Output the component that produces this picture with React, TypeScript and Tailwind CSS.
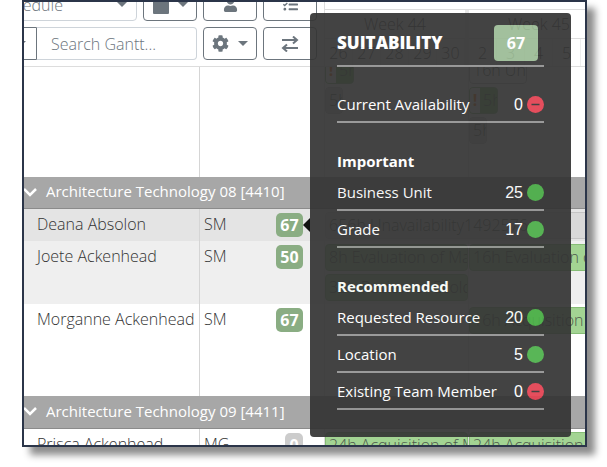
import type { ReactNode } from 'react';
import { FaCog, FaUser, FaTasks } from 'react-icons/fa';

interface Bar {
  label: string;
  kind: 'green' | 'gray' | 'white' | 'alert';
  className?: string;
}

interface Resource {
  name: string;
  grade: string;
  score: number;
  rowClass: string;
  weeks: Bar[][];
}

interface Criterion {
  label: string;
  value: number;
  met: boolean;
}

const WEEKS = [
  { name: 'Week 44', days: ['26', '27', '28', '29', '30'] },
  { name: 'Week 45', days: ['2', '3', '4', '5', ''] },
];

const DEANA: Resource = {
  name: 'Deana Absolon',
  grade: 'SM',
  score: 67,
  rowClass: 'h-8 bg-[#e4e4e4]',
  weeks: [[{ label: '656h Unavailability1492576', kind: 'gray', className: 'w-[270px]' }], []],
};

const JOETE: Resource = {
  name: 'Joete Ackenhead',
  grade: 'SM',
  score: 50,
  rowClass: 'h-[63px] bg-[#efefef]',
  weeks: [
    [
      { label: '8h Evaluation of Ma', kind: 'green' },
      { label: '32h Review of Ecoldy', kind: 'green' },
    ],
    [{ label: '16h Evaluation of Ma', kind: 'green' }],
  ],
};

const MORGANNE: Resource = {
  name: 'Morganne Ackenhead',
  grade: 'SM',
  score: 67,
  rowClass: 'h-[92px] bg-white',
  weeks: [[], [{ label: '16h Acquisition of M', kind: 'green' }]],
};

const PRISCA: Resource = {
  name: 'Prisca Ackenhead',
  grade: 'MG',
  score: 0,
  rowClass: 'h-4 bg-white',
  weeks: [
    [{ label: '24h Acquisition of M', kind: 'green', className: 'bg-[#8db37f]' }],
    [{ label: '24h Acquisition', kind: 'green' }],
  ],
};

const IMPORTANT: Criterion[] = [
  { label: 'Business Unit', value: 25, met: true },
  { label: 'Grade', value: 17, met: true },
];

const RECOMMENDED: Criterion[] = [
  { label: 'Requested Resource', value: 20, met: true },
  { label: 'Location', value: 5, met: true },
  { label: 'Existing Team Member', value: 0, met: false },
];

const BAR_STYLES = {
  green: 'bg-[#a3d493] border-[#86bd76]',
  gray: 'bg-[#d9d9d9] border-[#c4c4c4]',
  white: 'bg-white border-[#bbbbbb]',
  alert: 'bg-[#7cc367] border-[#86bd76]',
};

const Caret = ({ className = '' }: { className?: string }) => (
  <svg viewBox="0 0 10 5" className={`h-[5px] w-[10px] fill-[#6c757d] ${className}`}>
    <path d="M0 0h10L5 5z" />
  </svg>
);

const ToolButton = ({ label, children }: { label: string; children: ReactNode }) => (
  <button
    aria-label={label}
    className="flex h-[33px] w-[54px] shrink-0 items-center justify-center gap-[9px] rounded border border-[#6c757d] bg-white text-base text-[#6c757d]"
  >
    {children}
  </button>
);

const Toolbar = () => (
  <div className="flex w-[300px] shrink-0 flex-col gap-[6px] pb-[5px]">
    <div className="-mt-[14px] flex gap-[6px]">
      <div className="relative -ml-10 w-[153px] shrink-0">
        <select
          aria-label="View"
          className="h-[33px] w-full appearance-none rounded border border-[#ced4da] bg-white pl-3 text-base text-[#6c757d]"
        >
          <option>Schedule</option>
        </select>
        <Caret className="absolute top-[14px] right-[10px]" />
      </div>
      <ToolButton label="Calendar">
        <svg viewBox="0 0 16 18" className="h-[18px] w-4 fill-[#6c757d]">
          <path d="M0 6h16v11a1 1 0 0 1-1 1H1a1 1 0 0 1-1-1zM1 2h2V0h2v2h6V0h2v2h2a1 1 0 0 1 1 1v2H0V3a1 1 0 0 1 1-1z" />
        </svg>
        <Caret />
      </ToolButton>
      <ToolButton label="Resources">
        <FaUser size={15} />
      </ToolButton>
      <ToolButton label="Tasks">
        <FaTasks size={15} />
      </ToolButton>
    </div>
    <div className="flex gap-[6px]">
      <div className="-ml-10 flex w-[213px] shrink-0">
        <button
          aria-label="Search options"
          className="flex w-[53px] shrink-0 items-center justify-end rounded-l border border-[#6c757d] bg-white pr-[10px]"
        >
          <Caret />
        </button>
        <input
          type="text"
          aria-label="Search Gantt"
          placeholder="Search Gantt..."
          className="h-[33px] w-40 rounded-r border border-l-0 border-[#ced4da] bg-white px-[14px] text-base placeholder:text-[#6c757d]"
        />
      </div>
      <ToolButton label="Settings">
        <FaCog size={17} />
        <Caret />
      </ToolButton>
      <ToolButton label="Swap">
        <svg viewBox="0 0 18 16" className="h-4 w-[18px] fill-none stroke-[#6c757d] stroke-2">
          <path d="M1 4h15M12 0.5L16 4l-4 3.5M17 12H2M6 8.5L2 12l4 3.5" />
        </svg>
      </ToolButton>
    </div>
  </div>
);

const TimelineHeader = () => (
  <div className="flex min-w-0 flex-1 flex-col overflow-hidden border-l border-[#dddddd] text-[#444444]">
    <div className="h-2 border-b border-[#dddddd]" />
    <div className="flex">
      {WEEKS.map((week) => (
        <div key={week.name} className="w-36 shrink-0 border-r-4 border-[#e8e8e8]">
          <div className="h-[29px] border-b border-[#dddddd] text-center leading-7">{week.name}</div>
          <div className="flex h-[27px]">
            {week.days.map((day) => (
              <div key={day} className="min-w-0 flex-1 border-r border-[#eeeeee] text-center leading-7">
                {day}
              </div>
            ))}
          </div>
        </div>
      ))}
    </div>
  </div>
);

const BarItem = ({ bar }: { bar: Bar }) => (
  <div
    className={`flex h-[27px] shrink-0 overflow-hidden rounded-sm border text-base leading-6 whitespace-nowrap text-[#4d5a4d] ${BAR_STYLES[bar.kind]} ${bar.className ?? ''}`}
  >
    {bar.kind === 'alert' && <span className="w-[10px] shrink-0 bg-white text-center font-bold text-orange-500">!</span>}
    <span className="pl-[3px]">{bar.label}</span>
  </div>
);

const Lane = ({ weeks }: { weeks: Bar[][] }) => (
  <div className="flex min-w-0 flex-1 overflow-hidden border-l border-[#dddddd]">
    {weeks.map((bars, i) => (
      <div key={i} className="flex w-36 shrink-0 flex-col gap-[3px] border-r border-[#dddddd] pt-[3px]">
        {bars.map((bar) => (
          <BarItem key={bar.label} bar={bar} />
        ))}
      </div>
    ))}
  </div>
);

const ResourceRow = ({ resource }: { resource: Resource }) => (
  <div className={`flex overflow-hidden text-[#333333] ${resource.rowClass}`}>
    <div className="w-44 shrink-0 border-r border-[#d5d5d5] pt-1 pl-[13px] leading-[22px] whitespace-nowrap">
      {resource.name}
    </div>
    <div className="flex w-[124px] shrink-0 items-start justify-between pt-1 pr-[21px] pl-1 leading-[22px]">
      <span>{resource.grade}</span>
      <span
        className={`h-6 rounded-[5px] text-center leading-6 font-bold text-white ${
          resource.score > 0 ? 'w-[27px] bg-[#8aad83]' : 'w-[18px] bg-[#cccccc]'
        }`}
      >
        {resource.score}
      </span>
    </div>
    <Lane weeks={resource.weeks} />
  </div>
);

const GroupRow = ({ title, className }: { title: string; className: string }) => (
  <button
    className={`flex w-full items-center border-b border-[#8b8b8b] bg-[#a7a7a7] pb-[2px] text-left text-[15px] font-normal text-white ${className}`}
  >
    <svg viewBox="0 0 14 10" className="h-[10px] w-[14px] fill-none stroke-white stroke-[2.5]">
      <path d="M0 2l6 6 6-6" />
    </svg>
    <span className="pl-2">{title}</span>
  </button>
);

const CriterionRow = ({ criterion }: { criterion: Criterion }) => (
  <div className="flex h-[37px] items-center border-b-2 border-[#929292] pt-[2px]">
    <span className="flex-1 text-[15px] font-normal whitespace-nowrap">{criterion.label}</span>
    <span className="pr-1 font-['Liberation_Sans',sans-serif] font-normal">{criterion.value}</span>
    <svg viewBox="0 0 17 17" className="h-[17px] w-[17px]">
      <circle cx="8.5" cy="8.5" r="8.5" fill={criterion.met ? '#4cb049' : '#e33f50'} />
      {!criterion.met && <path d="M4.5 8.5h8" stroke="#333333" strokeWidth="1.5" />}
    </svg>
  </div>
);

const SuitabilityPopover = () => (
  <div role="tooltip" className="absolute top-[11px] left-[286px] w-[261px] opacity-92">
    <svg viewBox="0 0 7 14" className="absolute top-[205px] -left-[7px] h-[14px] w-[7px] fill-black">
      <path d="M7 0v14L0 7z" />
    </svg>
    <div className="rounded bg-[#343434] px-[27px] pb-[27px] text-white">
      <div className="flex h-[54px] items-center justify-between border-b-2 border-[#929292] pt-2">
        <h2 className="text-[17px] font-extrabold">SUITABILITY</h2>
        <span className="mr-[6px] h-9 w-11 rounded bg-[#9bbb95] text-center leading-9 font-bold">67</span>
      </div>
      <div className="pt-[19px]">
        <CriterionRow criterion={{ label: 'Current Availability', value: 0, met: false }} />
      </div>
      <h3 className="h-[51px] pt-[26px] text-[15px] leading-6 font-bold">Important</h3>
      {IMPORTANT.map((c) => (
        <CriterionRow key={c.label} criterion={c} />
      ))}
      <h3 className="h-[51px] pt-[26px] text-[15px] leading-6 font-bold">Recommended</h3>
      {RECOMMENDED.map((c) => (
        <CriterionRow key={c.label} criterion={c} />
      ))}
    </div>
  </div>
);

export default function App() {
  return (
    <div className="bg-white pr-5 pb-5 pl-[22px] font-['Open_Sans','Noto_Sans',sans-serif] text-base font-light">
      <div className="relative border-2 border-[#2b3549] bg-white shadow-[8px_8px_7px_0px_rgba(0,0,0,0.45)]">
        <div className="overflow-hidden">
          <div className="flex border-b border-[#dddddd]">
            <Toolbar />
            <TimelineHeader />
          </div>
          <div className="flex h-[110px]">
            <div className="w-44 shrink-0 border-r border-[#d5d5d5]" />
            <div className="w-[124px] shrink-0" />
            <div className="flex min-w-0 flex-1 overflow-hidden border-l border-[#dddddd]">
              <div className="-mt-[10px] flex w-36 shrink-0 flex-col gap-[3px] border-r border-[#dddddd]">
                <BarItem bar={{ label: '5h', kind: 'alert', className: 'w-[29px]' }} />
                <BarItem bar={{ label: '5h', kind: 'gray', className: 'w-[18px]' }} />
              </div>
              <div className="-mt-[10px] flex w-36 shrink-0 flex-col gap-[3px]">
                <BarItem bar={{ label: '16h Una', kind: 'white', className: 'w-[58px]' }} />
                <BarItem bar={{ label: '5h', kind: 'alert', className: 'w-[29px]' }} />
                <BarItem bar={{ label: '5h', kind: 'gray', className: 'w-[18px]' }} />
              </div>
            </div>
          </div>
          <GroupRow title="Architecture Technology 08 [4410]" className="h-8" />
          <ResourceRow resource={DEANA} />
          <ResourceRow resource={JOETE} />
          <ResourceRow resource={MORGANNE} />
          <GroupRow title="Architecture Technology 09 [4411]" className="h-[33px]" />
          <ResourceRow resource={PRISCA} />
        </div>
        <SuitabilityPopover />
      </div>
    </div>
  );
}
